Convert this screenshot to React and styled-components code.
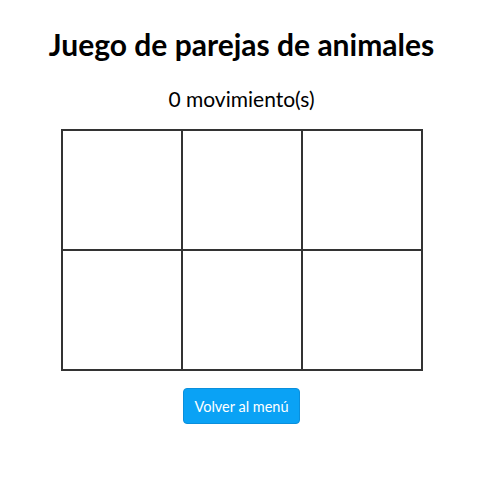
import React, { useState } from "react";
import styled, { createGlobalStyle } from "styled-components";

const GlobalStyle = createGlobalStyle`
  body {
    margin: 0;
    background: #fff;
    font-family: Lato, "Open Sans", sans-serif;
    color: #000;
  }
`;

const Page = styled.div`
  display: flex;
  flex-direction: column;
  align-items: center;
  padding-top: 25px;
`;

const Title = styled.h1`
  margin: 0;
  font-size: 30px;
  font-weight: 700;
  line-height: 38px;
`;

const Moves = styled.p`
  margin: 23px 0 0 0;
  font-size: 21px;
  line-height: 26px;
`;

const Board = styled.div`
  margin-top: 17px;
  display: grid;
  grid-template-columns: repeat(${(p) => p.cols}, 120px);
  grid-auto-rows: 120px;
  border: 1px solid #333;
`;

const Cell = styled.div`
  box-sizing: border-box;
  border: 1px solid #333;
  background: #fff;
`;

const MenuButton = styled.button`
  margin-top: 17px;
  height: 36px;
  padding: 0 10px;
  border: 1px solid #0a8fdc;
  border-radius: 4px;
  background: #0aa2f5;
  color: #fff;
  font-family: Lato, sans-serif;
  font-size: 14.5px;
  cursor: pointer;
`;

export default function App() {
  const [moves] = useState(0);
  const cells = Array.from({ length: 6 });

  return (
    <>
      <GlobalStyle />
      <Page>
        <Title>Juego de parejas de animales</Title>
        <Moves>{moves} movimiento(s)</Moves>
        <Board cols={3}>
          {cells.map((_, i) => (
            <Cell key={i} />
          ))}
        </Board>
        <MenuButton>Volver al menú</MenuButton>
      </Page>
    </>
  );
}
